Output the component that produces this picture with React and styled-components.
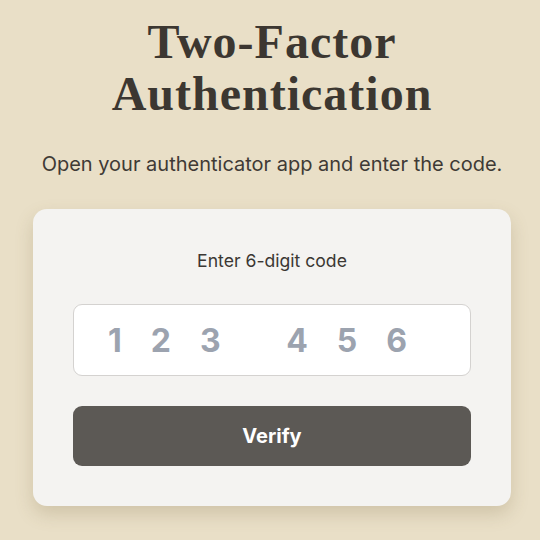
import React from "react";
import styled, { createGlobalStyle } from "styled-components";

const GlobalStyle = createGlobalStyle`
    html, body {
        margin: 0;
        padding: 0;
        background: #e9dfc7;
    }
    * {
        box-sizing: border-box;
    }
`

const App = () => {
    return (
        <PAGE>
            <GlobalStyle />
            <TITLE>Two-Factor<br />Authentication</TITLE>
            <SUBTITLE>Open your authenticator app and enter the code.</SUBTITLE>
            <CARD>
                <LABEL htmlFor="code">Enter 6-digit code</LABEL>
                <CODE_INPUT id="code" placeholder="123 456" maxLength={7} />
                <VERIFY_BUTTON type="button">Verify</VERIFY_BUTTON>
            </CARD>
        </PAGE>
    )
}

export default App;


export const PAGE = styled.div`
    width: 100%;
    min-height: 540px;
    padding: 16px 0 0 4px;
    display: flex;
    flex-direction: column;
    align-items: center;
    font-family: Inter, "Liberation Sans", sans-serif;
`

export const TITLE = styled.h1`
    margin: 0;
    font-family: "Liberation Serif", serif;
    font-weight: 700;
    font-size: 48px;
    line-height: 52px;
    letter-spacing: 1px;
    text-align: center;
    color: #3c3731;
`

export const SUBTITLE = styled.p`
    margin: 30px 0 0;
    font-size: 20px;
    line-height: 28px;
    color: #3f3a35;
    text-align: center;
`

export const CARD = styled.div`
    width: 478px;
    margin-top: 31px;
    padding: 40px 40px 40px;
    background: #f4f3f1;
    border-radius: 14px;
    box-shadow: 0 8px 18px rgba(120, 100, 60, 0.22);
    display: flex;
    flex-direction: column;
    align-items: stretch;
`

export const LABEL = styled.label`
    font-size: 17.6px;
    line-height: 24px;
    color: #3b3733;
    text-align: center;
`

export const CODE_INPUT = styled.input`
    margin-top: 31px;
    height: 72px;
    width: 100%;
    padding: 0 0 0 34px;
    background: #ffffff;
    border: 1px solid #d4d2d0;
    border-radius: 9px;
    font-family: Inter, "Liberation Sans", sans-serif;
    font-size: 32px;
    font-weight: 700;
    letter-spacing: 29px;
    color: #3b3733;
    outline: none;

    &::placeholder {
        color: #9ca3af;
    }
`

export const VERIFY_BUTTON = styled.button`
    margin-top: 30px;
    height: 60px;
    width: 100%;
    border: none;
    border-radius: 9px;
    background: #5c5955;
    color: #ffffff;
    font-family: Inter, "Liberation Sans", sans-serif;
    font-size: 20px;
    font-weight: 700;
    cursor: pointer;
`
